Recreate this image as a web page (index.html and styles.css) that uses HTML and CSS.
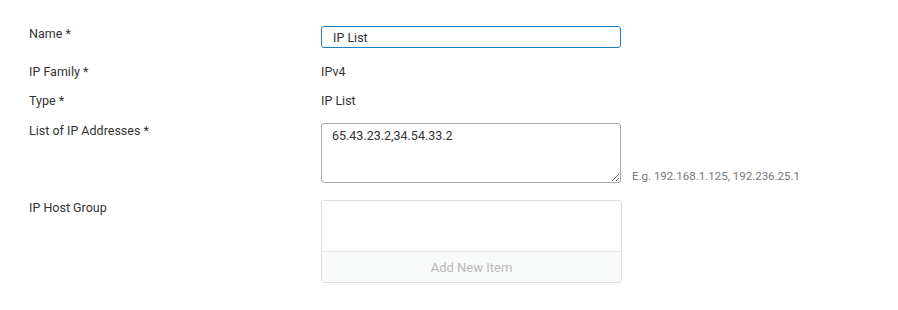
FILE: index.html
```html
<!DOCTYPE html>
<html lang="en">

<head>
    <meta charset="UTF-8">
    <title>IP List</title>
    <link rel="stylesheet" href="styles.css">
</head>

<body>
    <form class="form">
        <div class="row row-name">
            <label class="label">Name *</label>
            <input class="text-input" type="text" value="IP List">
        </div>
        <div class="row row-static">
            <span class="label">IP Family *</span>
            <span class="value">IPv4</span>
        </div>
        <div class="row row-static">
            <span class="label">Type *</span>
            <span class="value">IP List</span>
        </div>
        <div class="row row-list">
            <label class="label">List of IP Addresses *</label>
            <textarea class="text-area">65.43.23.2,34.54.33.2</textarea>
            <span class="hint">E.g. 192.168.1.125, 192.236.25.1</span>
        </div>
        <div class="row row-group">
            <span class="label">IP Host Group</span>
            <div class="item-box">
                <div class="item-list"></div>
                <button type="button" class="add-item">Add New Item</button>
            </div>
        </div>
    </form>
</body>

</html>
```

FILE: styles.css
```css
* {
    padding: 0;
    margin: 0;
    box-sizing: border-box;
}

body {
    background: #ffffff;
    font-family: "Roboto", "Liberation Sans", sans-serif;
    font-size: 12.5px;
    color: #333333;
}

.form {
    padding: 26px 0 0 29px;
}

.row {
    display: flex;
    align-items: flex-start;
}

.label {
    width: 292px;
    flex-shrink: 0;
    line-height: 16px;
}

.row-name .label {
    margin-top: 0;
}

.text-input {
    width: 300px;
    height: 22px;
    border: 1px solid #1a80c6;
    border-radius: 3px;
    padding: 0 11px;
    font: inherit;
    color: #333333;
    outline: none;
}

.row-static {
    margin-top: 16px;
    line-height: 16px;
}

.row-static + .row-static {
    margin-top: 13px;
}

.row-list {
    margin-top: 14px;
}

.row-list .label {
    margin-top: 0;
}

.text-area {
    width: 300px;
    height: 60px;
    border: 1px solid #aaaaaa;
    border-radius: 3px;
    padding: 4px 10px;
    font: inherit;
    color: #333333;
    resize: both;
}

.hint {
    align-self: flex-end;
    margin-left: 11px;
    color: #777777;
    font-size: 11.5px;
    line-height: 14px;
}

.row-group {
    margin-top: 17px;
}

.item-box {
    width: 301px;
    height: 83px;
    border: 1px solid #dddddd;
    border-radius: 3px;
    display: flex;
    flex-direction: column;
    overflow: hidden;
}

.item-list {
    flex: 1;
}

.add-item {
    height: 31px;
    border: none;
    border-top: 1px solid #e6e6e6;
    background: #f8f9f9;
    color: #bbbbbb;
    font: inherit;
    font-size: 13px;
}
```
